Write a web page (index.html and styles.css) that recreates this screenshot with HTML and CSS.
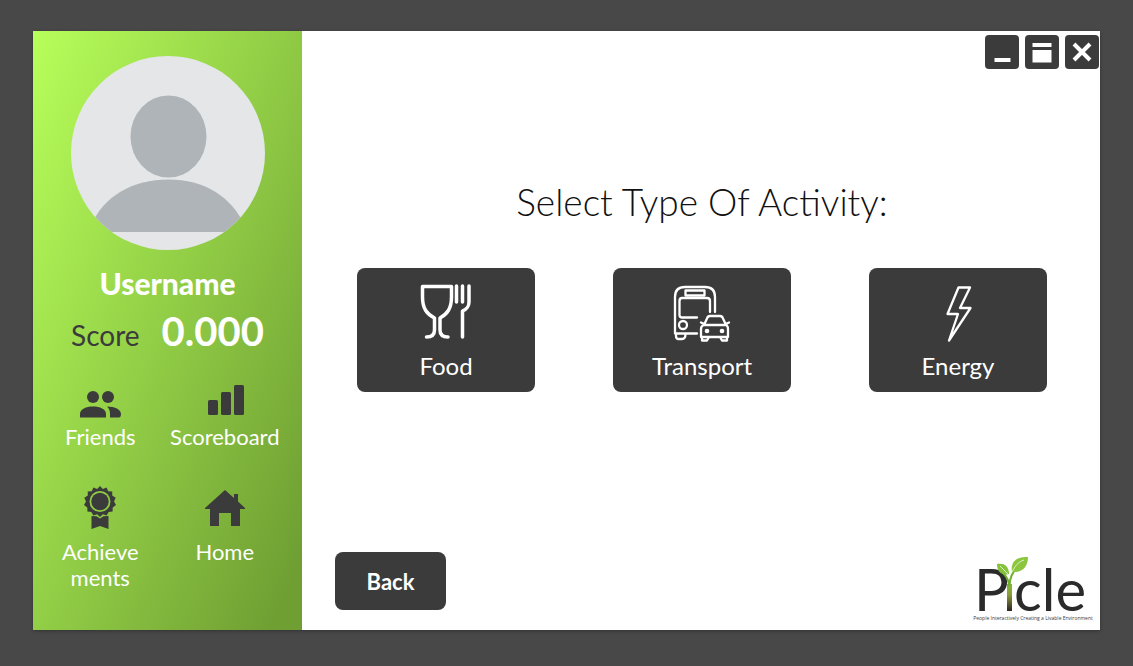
FILE: index.html
```html
<!DOCTYPE html>
<html lang="en">
<head>
<meta charset="utf-8">
<meta name="viewport" content="width=device-width, initial-scale=1">
<title>Picle</title>
<link rel="stylesheet" href="styles.css">
</head>
<body>
<div class="window">
  <aside class="sidebar">
    <svg class="avatar" viewBox="0 0 194 194" role="img" aria-label="Profile picture">
      <defs><clipPath id="avatar-clip"><circle cx="97" cy="97" r="97"/></clipPath></defs>
      <circle cx="97" cy="97" r="97" fill="#e4e6e8"/>
      <ellipse cx="97.500" cy="80.500" rx="38" ry="41" fill="#aeb4b8"/>
      <path clip-path="url(#avatar-clip)" d="M20 176V170C32 140 62 123.500 97.500 123.500S160 140 174 170V176Z" fill="#aeb4b8"/>
    </svg>
    <h2 class="username">Username</h2>
    <p class="score"><span class="score-label">Score</span><span class="score-value">0.000</span></p>
    <nav class="menu">
      <a class="menu-item" href="#friends">
        <svg class="menu-icon" viewBox="0 0 44 42" aria-hidden="true">
          <circle cx="15" cy="15" r="6"/><circle cx="30" cy="15" r="6"/>
          <path d="M2 35.500V32C2 27 8 24.500 15 24.500S28 27 28 32V35.500Z"/>
          <path d="M29 24.500C37 24.500 43 27.500 43 32C43 34.500 42 35.500 41 35.500H32V32C32 28.500 31 26.500 29 24.500Z"/>
        </svg>
        <span>Friends</span>
      </a>
      <a class="menu-item" href="#scoreboard">
        <svg class="menu-icon" viewBox="0 0 44 42" aria-hidden="true">
          <rect x="5" y="18" width="10" height="15" rx="1.500"/>
          <rect x="18" y="10" width="10" height="23" rx="1.500"/>
          <rect x="31" y="3" width="10" height="30" rx="1.500"/>
        </svg>
        <span>Scoreboard</span>
      </a>
      <a class="menu-item menu-item-spaced" href="#achievements">
        <svg class="menu-icon" viewBox="0 0 44 44" aria-hidden="true">
          <path fill-rule="evenodd" d="M22 1L24.800 4L28.600 2.400L30.200 6.200L34.300 6.500L34.200 10.600L37.700 12.700L36 16.500L38 20L34.700 22.500L34.600 26.500L30.700 27L28.600 30.500L24.800 29.300L22 32L19.200 29.300L15.400 30.500L13.300 27L9.400 26.500L9.300 22.500L6 20L8 16.500L6.300 12.700L9.800 10.600L9.700 6.500L13.800 6.200L15.400 2.400L19.200 4ZM22 6A10.500 10.500 0 1 0 22 27A10.500 10.500 0 1 0 22 6Z"/>
          <circle cx="22" cy="16.500" r="8.700"/>
          <path d="M13.500 31L18.500 31.300L22 33.500L25.500 31.300L30.500 31V44L22 41L13.500 44Z"/>
        </svg>
        <span>Achieve<br>ments</span>
      </a>
      <a class="menu-item menu-item-spaced" href="#home">
        <svg class="menu-icon" viewBox="0 0 44 44" aria-hidden="true">
          <path d="M22 5L31 13V9H35V16.500L42 23V24H37V41H28V28H16V41H7V24H2V23Z"/>
        </svg>
        <span>Home</span>
      </a>
    </nav>
  </aside>

  <main class="content">
    <div class="controls">
      <button class="control" type="button" aria-label="Minimize">
        <svg viewBox="0 0 34 34" aria-hidden="true"><path d="M9.500 23H25.500V27H9.500Z"/></svg>
      </button>
      <button class="control" type="button" aria-label="Maximize">
        <svg viewBox="0 0 34 34" aria-hidden="true"><path d="M7.500 8H26.500V12H7.500ZM7.500 15H26.500V27.500H7.500Z"/></svg>
      </button>
      <button class="control" type="button" aria-label="Close">
        <svg viewBox="0 0 34 34" aria-hidden="true"><path d="M9 9L25 25M25 9L9 25" stroke="#fff" stroke-width="4"/></svg>
      </button>
    </div>

    <section class="picker">
      <h1 class="title">Select Type Of Activity:</h1>
      <div class="cards">
        <button class="card" type="button">
          <svg class="card-icon" viewBox="0 0 60 60" aria-hidden="true">
            <g stroke-width="3.500">
              <path d="M6.500 4.500H35.500V15C35.500 27 31 32 24 36V48C24 53 27 55 32 55M6.500 4.500V15C6.500 27 11 32 18.500 36V48C18.500 53 15 55 10.500 55"/>
              <path d="M40.500 4V20M46.500 4V20M53 4V20C53 25 51 27 46.500 29V55"/>
            </g>
          </svg>
          <span>Food</span>
        </button>
        <button class="card" type="button">
          <svg class="card-icon" viewBox="0 0 60 60" aria-hidden="true">
            <g stroke-width="2.300">
              <path d="M25 51.500H3V15C3 8 7 5 13 5H33C39 5 43 8 43 15V30M4 52V54C4 56 5 57 6.500 57H10C12 57 13.500 56 13.500 52"/>
              <rect x="13.500" y="8.500" width="19" height="5"/>
              <path d="M25 35.500H10C8.500 35.500 7.500 34.500 7.500 33V19C7.500 17 8.500 16 10 16H35C37 16 38 17 38 19V30"/>
              <circle cx="11" cy="43" r="4"/>
              <path d="M32 43L35 36.500C35.500 35 36.500 34 38 34H48C49.500 34 50.500 35 51 36.500L54 43ZM32 43C30 43.500 29 45 29 47V55H56V47C56 45 55 43.500 54 43M32 42L29 40.500M54 42L57 40.500M30 55V58.500H35L37 55M55 55V58.500H50L48 55"/>
              <circle cx="35" cy="49" r="1.200"/><circle cx="50" cy="49" r="1.200"/>
            </g>
          </svg>
          <span>Transport</span>
        </button>
        <button class="card" type="button">
          <svg class="card-icon" viewBox="0 0 60 60" aria-hidden="true">
            <path stroke-width="2.300" d="M30.500 5.500H42L32 26H42.500L21 58.500L30 32H19.500Z"/>
          </svg>
          <span>Energy</span>
        </button>
      </div>
    </section>

    <footer class="footer">
      <button class="back" type="button">Back</button>
      <svg class="logo" viewBox="0 0 124 68" role="img" aria-label="Picle, People Interactively Creating a Livable Environment">
        <defs>
          <linearGradient id="stem" x1="0" y1="0" x2="0" y2="1">
            <stop offset="0" stop-color="#7fbd32"/><stop offset=".4" stop-color="#8d9a3a"/><stop offset="1" stop-color="#2b2424"/>
          </linearGradient>
        </defs>
        <text class="logo-name" x="3" y="56">P</text>
        <text class="logo-name" x="43" y="56">cle</text>
        <rect x="36" y="29" width="5" height="27" fill="url(#stem)"/>
        <path d="M38 31C38 25 35 21 32 18M38.500 31C38.500 22 42 15 50 9" fill="none" stroke="#6fae2c" stroke-width="2"/>
        <path d="M26 9C33 8 38 11 38 19C31 21 26 17 26 9Z" fill="#83c23a"/>
        <path d="M41 17C39 7 46 1 57 2C57 12 51 18 41 17Z" fill="#8cc63f"/>
        <path d="M29 11L37 19M41 17C44 11 47 7 53 5" fill="none" stroke="#dff0c5" stroke-width="1"/>
        <text class="logo-tagline" x="62" y="65" text-anchor="middle">People Interactively Creating a Livable Environment</text>
      </svg>
    </footer>
  </main>
</div>
</body>
</html>
```
FILE: styles.css
```css
* {
  box-sizing: border-box;
}

body {
  margin: 0;
  min-height: 100vh;
  display: flex;
  padding: 31px 33px 36px;
  background: #484848;
  font-family: Lato, "Open Sans", sans-serif;
}

h1, h2, p {
  margin: 0;
}

button {
  border: 0;
  padding: 0;
  background: #3b3b3b;
  color: #fff;
  font-family: inherit;
  cursor: pointer;
}

.window {
  flex: 1;
  display: flex;
  background: #fff;
  box-shadow: 0 1px 3px #333;
}

.sidebar {
  flex: 0 0 269px;
  display: flex;
  flex-direction: column;
  align-items: center;
  padding-top: 25px;
  background: linear-gradient(112deg, #b7ff5a, #6f9f33 94%);
  color: #fff;
}

.avatar {
  width: 194px;
  height: 194px;
}

.username {
  margin-top: 14px;
  font-size: 30px;
  line-height: 38px;
  font-weight: 900;
}

.score {
  display: flex;
  align-items: baseline;
  gap: 22px;
  margin-top: 8px;
  line-height: 42px;
}

.score-label {
  color: #3b3b3b;
  font-size: 28px;
}

.score-value {
  font-size: 40px;
  font-weight: 700;
}

.menu {
  align-self: stretch;
  display: grid;
  grid-template-columns: 1fr 1fr;
  row-gap: 35px;
  margin-top: 26px;
  padding: 0 15px 0 5px;
}

.menu-item {
  display: flex;
  flex-direction: column;
  align-items: center;
  color: #fff;
  font-size: 22px;
  line-height: 26px;
  text-align: center;
  text-decoration: none;
}

.menu-icon {
  width: 44px;
  fill: #3b3b3b;
}

.menu-item-spaced {
  gap: 10px;
}

.content {
  flex: 1;
  display: flex;
  flex-direction: column;
}

.controls {
  display: flex;
  justify-content: flex-end;
  gap: 6px;
  padding: 4px 1px 0;
}

.control {
  width: 34px;
  height: 34px;
  border-radius: 4px;
}

.control svg {
  display: block;
  fill: #fff;
}

.picker {
  flex: 1;
  padding: 109px 53px 0 55px;
}

.title {
  color: #111;
  font-size: 37px;
  line-height: 48px;
  font-weight: 300;
  text-align: center;
}

.cards {
  display: flex;
  justify-content: space-between;
  gap: 24px;
  margin-top: 42px;
}

.card {
  flex: 0 1 178px;
  display: flex;
  flex-direction: column;
  align-items: center;
  gap: 8px;
  padding: 14px 0 10px;
  border-radius: 8px;
  font-size: 24px;
  line-height: 32px;
}

.card-icon {
  width: 60px;
  height: 60px;
  fill: none;
  stroke: #fff;
  stroke-linecap: round;
  stroke-linejoin: round;
}

.footer {
  display: flex;
  justify-content: space-between;
  align-items: flex-end;
  padding: 0 5px 7px 33px;
}

.back {
  width: 111px;
  height: 58px;
  margin-bottom: 13px;
  border-radius: 8px;
  font-size: 22px;
  font-weight: 700;
}

.logo {
  width: 124px;
  height: 68px;
}

.logo-name {
  fill: #2b2b2b;
  font-size: 58px;
}

.logo-tagline {
  fill: #3b3b3b;
  font-family: "Open Sans", sans-serif;
  font-size: 5px;
}
```
